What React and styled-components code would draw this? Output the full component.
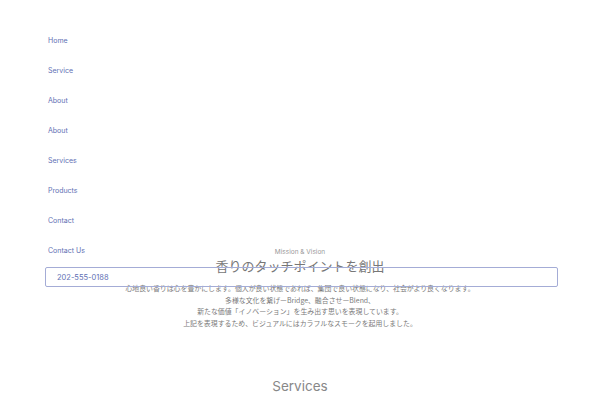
import React from 'react';
import styled, { createGlobalStyle } from 'styled-components';

const GlobalStyle = createGlobalStyle`
    html, body {
        margin: 0;
        padding: 0;
        background: #fff;
    }
    body {
        font-family: "Inter", "Noto Sans CJK JP", sans-serif;
    }
`;

const links = ['Home', 'Service', 'About', 'About', 'Services', 'Products', 'Contact', 'Contact Us'];

const App = () => {
    return (
        <Page>
            <GlobalStyle />
            <MenuOverlay>
                <MenuList>
                    {links.map((label, i) => (
                        <MenuItem key={i}>
                            <MenuLink href="#">{label}</MenuLink>
                        </MenuItem>
                    ))}
                </MenuList>
                <PhoneBox>202-555-0188</PhoneBox>
            </MenuOverlay>

            <MissionSection>
                <Eyebrow>Mission &amp; Vision</Eyebrow>
                <Heading>香りのタッチポイントを創出</Heading>
                <Lead>
                    <p>心地良い香りは心を豊かにします。個人が良い状態であれば、集団で良い状態になり、社会がより良くなります。</p>
                    <p>多様な文化を繋げーBridge、融合させーBlend、</p>
                    <p>新たな価値「イノベーション」を生み出す思いを表現しています。</p>
                    <p>上記を表現するため、ビジュアルにはカラフルなスモークを起用しました。</p>
                </Lead>
            </MissionSection>

            <ServicesSection>
                <SectionTitle>Services</SectionTitle>
            </ServicesSection>
        </Page>
    );
}

export default App;

const Page = styled.div`
    position: relative;
    width: 600px;
    height: 400px;
    overflow: hidden;
    background: #fff;
`;

const MenuOverlay = styled.nav`
    position: absolute;
    top: 0;
    left: 0;
    right: 0;
    z-index: 2;
    padding: 25px 42px 0 45px;
`;

const MenuList = styled.ul`
    list-style: none;
    margin: 0;
    padding: 0;
`;

const MenuItem = styled.li`
    height: 30px;
    display: flex;
    align-items: center;
    padding-left: 3px;
`;

const MenuLink = styled.a`
    font-family: "Inter", sans-serif;
    font-size: 7px;
    color: #6170b4;
    text-decoration: none;
`;

const PhoneBox = styled.div`
    margin-top: 2px;
    height: 20px;
    box-sizing: border-box;
    border: 1px solid #a4acd6;
    border-radius: 2px;
    display: flex;
    align-items: center;
    padding-left: 11px;
    font-family: "Inter", sans-serif;
    font-size: 7.5px;
    color: #6170b4;
`;

const MissionSection = styled.section`
    padding-top: 248px;
    display: flex;
    flex-direction: column;
    align-items: center;
    text-align: center;
`;

const Eyebrow = styled.div`
    font-family: "Inter", sans-serif;
    font-size: 6.5px;
    color: #999;
    line-height: 9px;
    margin-bottom: 1px;
`;

const Heading = styled.h2`
    margin: 0;
    font-family: "Noto Sans CJK JP", sans-serif;
    font-weight: 400;
    font-size: 13px;
    line-height: 16px;
    color: #777;
`;

const Lead = styled.div`
    margin-top: 9px;
    font-family: "Noto Sans CJK JP", sans-serif;
    font-size: 6.9px;
    color: #7a7a7a;

    p {
        margin: 0;
        line-height: 11.7px;
    }
`;

const ServicesSection = styled.section`
    padding-top: 47px;
    display: flex;
    justify-content: center;
`;

const SectionTitle = styled.h2`
    margin: 0;
    font-family: "Inter", sans-serif;
    font-weight: 400;
    font-size: 13.5px;
    line-height: 18px;
    color: #888;
`;
